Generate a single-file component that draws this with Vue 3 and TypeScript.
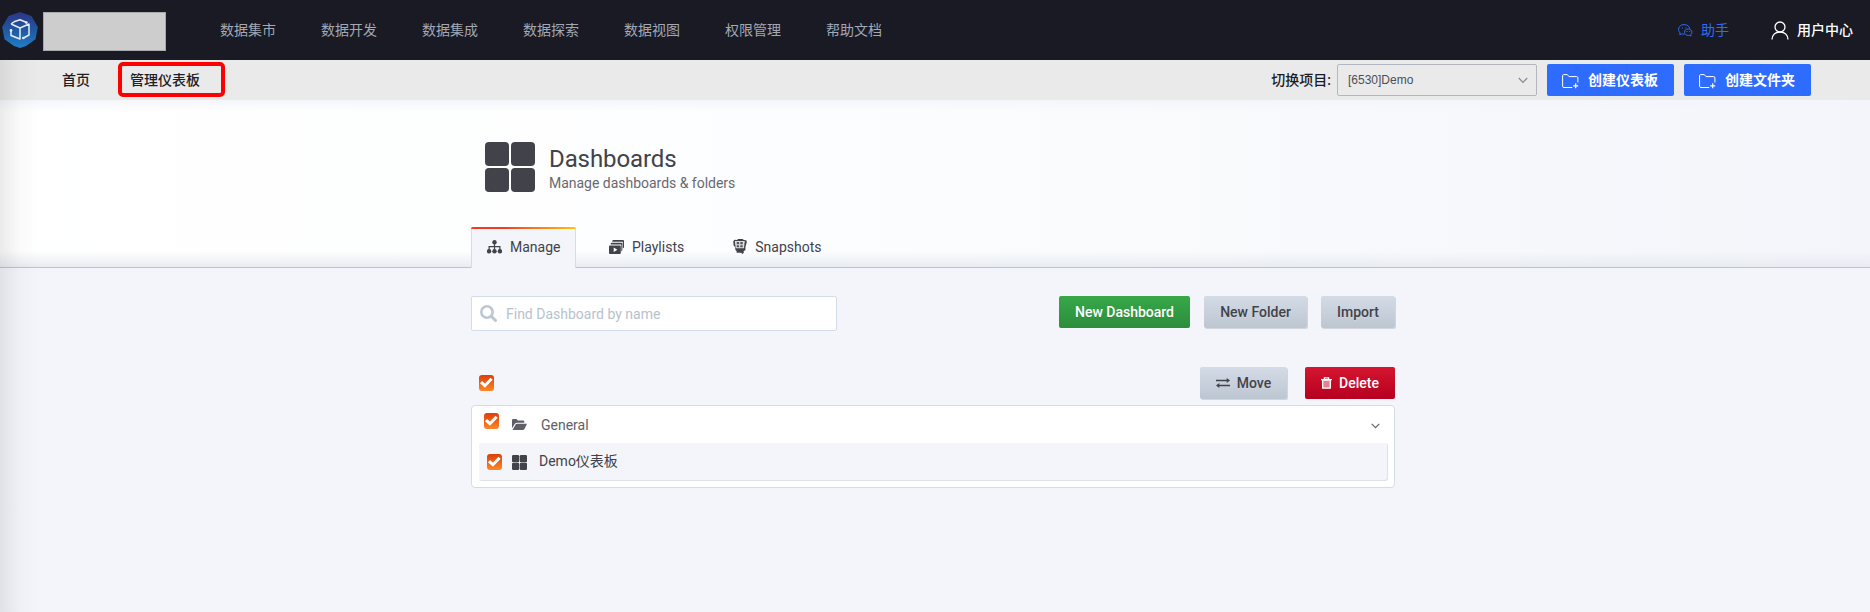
<script setup lang="ts">
import { ref } from 'vue'

const navItems: string[] = ['数据集市', '数据开发', '数据集成', '数据探索', '数据视图', '权限管理', '帮助文档']
const createActions: string[] = ['创建仪表板', '创建文件夹']
const allChecked = ref(true)
const folderChecked = ref(true)
const itemChecked = ref(true)
</script>

<template>
  <div class="page">
    <header class="topbar">
      <svg class="logo" viewBox="0 0 36 36">
        <defs>
          <linearGradient id="logoFill" x1="0" y1="0" x2="0" y2="1">
            <stop offset="0" stop-color="#2d3585" />
            <stop offset="0.5" stop-color="#21589f" />
            <stop offset="1" stop-color="#1f7fca" />
          </linearGradient>
        </defs>
        <path d="M18 0 29.5 4 35.8 15 33.5 27.3 24 34 18 36 12 34 2.5 27.3 0.2 15 6.5 4Z" fill="url(#logoFill)" />
        <path d="M12 9.8 18 7.8 24 10.3M9 12 18 16 27 12V23L21.5 26M9 12 12 9.800M18 16V27L9 23.5V18" fill="none" stroke="#e4edf7" stroke-width="1.5" stroke-linejoin="round" />
        <g fill="#e4edf7"><circle cx="24.3" cy="10.6" r="1.4" /><circle cx="9" cy="18.4" r="1.3" /><circle cx="21.3" cy="26" r="1.3" /></g>
      </svg>
      <div class="brand"></div>
      <nav class="nav">
        <a v-for="n in navItems" :key="n">{{ n }}</a>
      </nav>
      <a class="helper">
        <svg width="15" height="13" viewBox="0 0 15 13" fill="none" stroke="currentColor" stroke-width="1">
          <path d="M6.4 10.2C5.4 10.3 4.5 10.1 3.7 9.8L1.8 10.8 2.1 8.9C-1 6.3 .7 .6 6 .6 9.4 .6 11.6 2.6 11.8 4.9" />
          <path d="M10.2 5C7.9 5 6.5 6.4 6.5 8.2S8 11.4 10.2 11.4L11.3 11.3 13 12 12.8 10.5C15.2 8.5 13.6 5 10.2 5Z" />
          <path d="M4 4h1M7.3 4h1M8.6 7.5h1M11.1 7.5h1" stroke-width="1.2" />
        </svg>
        <span>助手</span>
      </a>
      <a class="user">
        <svg width="18" height="19" viewBox="0 0 18 19" fill="none" stroke="currentColor" stroke-width="1.3">
          <circle cx="9" cy="6" r="5" />
          <path d="M1 18.5C1.2 14 4.4 11 9 11s7.8 3 8 7.500" />
        </svg>
        <span>用户中心</span>
      </a>
    </header>

    <div class="subbar">
      <a class="crumb">首页</a>
      <a class="crumb marked">管理仪表板</a>
      <div class="tools">
        <span class="switch-label">切换项目:</span>
        <div class="select">
          <span>[6530]Demo</span>
          <svg width="10" height="7" viewBox="0 0 10 7" fill="none" stroke="#858891" stroke-width="1.2"><path d="M.8 1 5 5.300 9.200 1" /></svg>
        </div>
        <button v-for="a in createActions" :key="a" class="create">
          <svg width="17" height="15" viewBox="0 0 17 15" fill="none" stroke="#fff" stroke-width="1">
            <path d="M10.300 13.500H2A1.300 1.300 0 0 1 .600 12.200V1.700Q.600.600 1.700.600H5.300L7 2.600H14.600Q15.900 2.600 15.900 3.900V8.500" />
            <path d="M13.700 9.300v5M11.200 11.800h5" stroke-width="1.200" />
          </svg>
          <span>{{ a }}</span>
        </button>
      </div>
    </div>

    <section class="hero">
      <div class="container hero-inner">
        <div class="heading">
          <svg class="grid-icon" viewBox="0 0 50 50" fill="#41424a">
            <rect width="24" height="24" rx="4" /><rect x="26" width="24" height="24" rx="4" />
            <rect y="26" width="24" height="24" rx="4" /><rect x="26" y="26" width="24" height="24" rx="4" />
          </svg>
          <div class="titles">
            <h1>Dashboards</h1>
            <p>Manage dashboards &amp; folders</p>
          </div>
        </div>
        <div class="tabs">
          <a class="tab active">
            <svg width="15" height="14" viewBox="0 0 15 14" fill="#41424a">
              <circle cx="7.500" cy="2.200" r="2.200" /><circle cx="2.100" cy="11.300" r="2.200" /><circle cx="7.500" cy="11.300" r="2.200" /><circle cx="12.900" cy="11.300" r="2.200" />
              <path d="M7.500 2V11M2.100 11V6.600H12.900V11" fill="none" stroke="#41424a" stroke-width="1.200" />
            </svg>
            <span>Manage</span>
          </a>
          <a class="tab playlists">
            <svg width="15" height="14" viewBox="0 0 15 14" fill="#41424a">
              <path fill-rule="evenodd" d="M1 5.500h9.800a1 1 0 0 1 1 1V13a1 1 0 0 1-1 1H1a1 1 0 0 1-1-1V6.500a1 1 0 0 1 1-1ZM4.700 7.500v4.500L8.400 9.700Z" />
              <path d="M1.700 4.500V3.700a1 1 0 0 1 1-1h9.600a1 1 0 0 1 1 1v6.700l-1 1V4.500ZM3.300 1.800V1a1 1 0 0 1 1-1H14a1 1 0 0 1 1 1v6.600l-1.200 1V1.800Z" />
            </svg>
            <span>Playlists</span>
          </a>
          <a class="tab snapshots">
            <svg width="14" height="15" viewBox="0 0 14 15">
              <path d="M.200 2.300 1.600.800 4 1 5 0H9.500L10.500.800 13.500 1.500 13.800 3.200 12.400 8V11.200L10.700 12V14L9.200 15 8.200 13.800H3.600V11.900L2.400 10.900 2.100 8 .700 6.800Z" fill="#41424a" />
              <path d="M1.800 1.900H11.800L10.900 9.300H2.700Z" fill="#dedee2" />
              <path d="M3.700 3h2.400v2.200H3.700ZM7.300 3h2.400v2.200H7.300ZM3.700 6.200h2.400V8.200H3.700ZM7.300 6.200h2.400V8.200H7.300Z" fill="#55565e" />
            </svg>
            <span>Snapshots</span>
          </a>
        </div>
      </div>
    </section>

    <main class="container content">
      <div class="search-row">
        <div class="search">
          <svg width="17" height="17" viewBox="0 0 17 17" fill="none" stroke="#bcc7d3" stroke-width="2.600">
            <circle cx="7" cy="7" r="5.700" /><path d="M11.200 11.200 15.400 15.400" stroke-width="3" stroke-linecap="round" />
          </svg>
          <span>Find Dashboard by name</span>
        </div>
        <div class="actions">
          <button class="btn success">New Dashboard</button>
          <button class="btn folder">New Folder</button>
          <button class="btn import">Import</button>
        </div>
      </div>

      <div class="bulk-row">
        <span class="check" role="checkbox" :aria-checked="allChecked" @click="allChecked = !allChecked">
          <svg v-if="allChecked" viewBox="0 0 15 16"><path d="M2 7.100 5.900 10.700 12.600 3.700" /></svg>
        </span>
        <div class="actions">
          <button class="btn move">
            <svg width="14" height="10" viewBox="0 0 14 10" fill="#41424a">
              <path d="M0 1.700H10.700V0L14 2.500 10.700 5V3.300H0ZM14 6.700H3.300V5L0 7.500 3.300 10V8.300H14Z" />
            </svg>
            <span>Move</span>
          </button>
          <button class="btn danger">
            <svg width="11" height="12" viewBox="0 0 11 12">
              <path d="M0 2.600H11M3.400 2.500V.800H7.600V2.500" fill="none" stroke="#fff" stroke-width="1.300" />
              <path d="M1.700 3H9.300V11.200H1.700Z" fill="#df8291" stroke="#fff" stroke-width="1.300" stroke-linejoin="round" />
            </svg>
            <span>Delete</span>
          </button>
        </div>
      </div>

      <div class="panel">
        <div class="folder-row">
          <span class="check" role="checkbox" :aria-checked="folderChecked" @click="folderChecked = !folderChecked">
            <svg v-if="folderChecked" viewBox="0 0 15 16"><path d="M2 7.100 5.900 10.700 12.600 3.700" /></svg>
          </span>
          <svg class="open" width="15" height="11" viewBox="0 0 15 11" fill="#5f6067">
            <path d="M0 9.200V1.200A1.200 1.200 0 0 1 1.200 0H4.400L5.900 1.400H11.100A1.200 1.200 0 0 1 12.300 2.600V3.800H5.100A3 3 0 0 0 2.700 5ZM.500 11 3.500 5.700Q4 4.800 5 4.800H15L12.600 9.700Q12 11 10.700 11Z" />
          </svg>
          <span class="folder-name">General</span>
          <svg class="chev" width="9" height="6" viewBox="0 0 9 6" fill="none" stroke="#63646b" stroke-width="1.200"><path d="M.700.800 4.500 4.600 8.300.800" /></svg>
        </div>
        <div class="item-row">
          <span class="check" role="checkbox" :aria-checked="itemChecked" @click="itemChecked = !itemChecked">
            <svg v-if="itemChecked" viewBox="0 0 15 16"><path d="M2 7.100 5.900 10.700 12.600 3.700" /></svg>
          </span>
          <svg class="small-grid" width="15" height="15" viewBox="0 0 50 50" fill="#41424a">
            <rect width="24" height="24" rx="4" /><rect x="26" width="24" height="24" rx="4" />
            <rect y="26" width="24" height="24" rx="4" /><rect x="26" y="26" width="24" height="24" rx="4" />
          </svg>
          <span class="item-name">Demo仪表板</span>
        </div>
      </div>
    </main>
    <div class="edge-shade"></div>
  </div>
</template>

<style>
body { background: #f4f5fa; }
</style>

<style scoped>
.page {
  position: relative;
  height: 612px;
  overflow: hidden;
  background: #f4f5fa;
  color: #41424a;
  font: 14px/20px Roboto, "Noto Sans CJK SC", sans-serif;
}
.page *, .page *::before { box-sizing: border-box; }
svg { display: block; flex: none; }
button { border: 0; font-family: inherit; }

.topbar {
  display: flex;
  align-items: center;
  height: 60px;
  padding: 0 17px 0 2px;
  background: #1a1a25;
}
.logo { width: 36px; height: 36px; }
.brand { width: 123px; height: 39px; margin: 3px 0 0 5px; background: #cdcdcd; border: 1px solid #a9a9ad; }
.nav { display: flex; gap: 45px; margin-left: 54px; color: #a3a8b3; }
.helper { display: flex; align-items: center; gap: 8px; margin-left: auto; color: #2f6bf5; }
.user { display: flex; align-items: center; gap: 8px; margin-left: 42px; color: #fff; }
.user span { font-weight: 500; }

.subbar { display: flex; align-items: center; height: 40px; padding: 0 59px 0 62px; background: #eaeaea; color: #202024; }
.crumb { font-weight: 500; }
.marked {
  width: 107px;
  height: 35px;
  margin: 0 0 1px 28px;
  padding-left: 8px;
  border: 4px solid #fe0000;
  border-radius: 5px;
  line-height: 28px;
}
.tools { display: flex; align-items: center; margin-left: auto; }
.switch-label { font-weight: 500; margin-right: 6px; color: #1a1a25; }
.select {
  display: flex;
  align-items: center;
  justify-content: space-between;
  width: 200px;
  height: 32px;
  padding: 0 8px 0 10px;
  border: 1px solid #b4b6c1;
  border-radius: 2px;
  color: #4c4e58;
  font: 12px/30px "Liberation Sans", Arial, sans-serif;
}
.create {
  display: flex;
  align-items: center;
  gap: 9px;
  width: 127px;
  height: 32px;
  margin-left: 10px;
  padding: 0 0 2px 15px;
  border-radius: 2px;
  background: #2e6bff;
  color: #fff;
  font-size: 14px;
  font-weight: 700;
}
.create svg { margin-top: 4px; }

.hero {
  height: 168px;
  border-bottom: 1px solid #b9c5d3;
  background:
    linear-gradient(to bottom, rgba(244, 245, 250, 0.9), transparent 12px),
    linear-gradient(to top, #e8ecf2, rgba(240, 243, 247, 0) 16px),
    linear-gradient(90deg, #fff 0%, #fcfdfe 45%, #f4f5fa 100%);
}
.container { width: 924px; margin-left: 471px; }
.hero-inner { display: flex; flex-direction: column; height: 168px; }
.heading { display: flex; padding: 42px 0 0 14px; height: 127px; }
.grid-icon { width: 50px; height: 50px; }
.titles { margin-left: 14px; }
h1 { margin: 3px 0 0; font-size: 24px; font-weight: 400; line-height: 28px; letter-spacing: -0.1px; }
p { margin: 0; color: #686970; line-height: 20px; letter-spacing: -0.02px; }
.tabs { display: flex; align-items: flex-start; }
.tab { display: flex; align-items: center; gap: 8px; height: 41px; padding-bottom: 2px; }
.active {
  position: relative;
  width: 105px;
  padding: 0 0 3px 15px;
  background: #f4f5fa;
  border: 1px solid #d3dce8;
  border-bottom: 0;
  border-radius: 3px 3px 0 0;
}
.active::before {
  content: "";
  position: absolute;
  inset: -1px -1px auto;
  height: 2px;
  border-radius: 3px 3px 0 0;
  background: linear-gradient(90deg, #f13b23 30%, #ffc20f);
}
.playlists { margin-left: 33px; }
.snapshots { margin-left: 49px; }

.content { padding-top: 28px; }
.search-row { display: flex; height: 70px; justify-content: space-between; }
.search {
  display: flex;
  align-items: center;
  gap: 9px;
  width: 366px;
  height: 35px;
  padding-left: 8px;
  background: #fff;
  border: 1px solid #d3dce9;
  border-radius: 2px;
  color: #b8c2cd;
}
.actions { display: flex; }
.btn {
  display: flex;
  align-items: center;
  justify-content: center;
  gap: 7px;
  height: 32px;
  padding: 0;
  border-radius: 2px;
  background: linear-gradient(#d4dbe7, #bcc6d1);
  box-shadow: 1px 1px 0 #d2d5db;
  color: #41424a;
  font-size: 14px;
  font-weight: 500;
  text-shadow: 0 1px 0 rgba(255, 255, 255, 0.2);
}
.success { width: 131px; background: linear-gradient(#37a849, #2c8d3c); box-shadow: none; color: #fff; text-shadow: 0 1px 0 rgba(0, 0, 0, 0.1); }
.folder { width: 103px; margin-left: 14px; }
.import { width: 74px; margin-left: 14px; }
.bulk-row { display: flex; justify-content: space-between; height: 39px; padding: 1px 0 0 8px; }
.bulk-row .check { margin-top: 8px; }
.move { width: 87px; }
.danger { width: 90px; margin-left: 18px; background: linear-gradient(#d5152f, #b50020); box-shadow: none; color: #fff; text-shadow: none; }
.check { display: block; flex: none; width: 15px; height: 16px; border-radius: 3px; background: linear-gradient(#dc3f0b, #fd8725); }
.check path { fill: none; stroke: #fff; stroke-width: 3; }

.panel { width: 924px; height: 83px; padding: 0 6px 0 7px; background: #fff; border: 1px solid #d3dce8; border-radius: 4px; }
.folder-row { display: flex; height: 37px; padding: 0 8px 0 5px; color: #5f6067; }
.folder-row .check { margin-top: 7px; }
.open { margin: 13px 14px 0 13px; }
.folder-name { margin-top: 9px; }
.chev { margin: 17px 0 0 auto; }
.item-row {
  display: flex;
  align-items: center;
  height: 38px;
  padding-left: 8px;
  border-radius: 3px;
  background: #f4f5fa;
  box-shadow: inset -1px -1px 0 #dfe1e6;
}
.small-grid { margin: 0 12px 0 10px; }
.item-name { margin-bottom: 3px; }
.edge-shade {
  position: absolute;
  inset: 60px auto 0 0;
  width: 40px;
  background: linear-gradient(90deg, rgba(0, 0, 0, 0.08), rgba(0, 0, 0, 0.02) 50%, transparent);
}
</style>
